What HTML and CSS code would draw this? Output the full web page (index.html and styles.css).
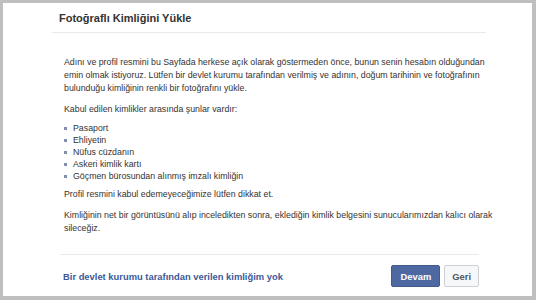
FILE: index.html
```html
<!DOCTYPE html>
<html lang="tr">

<head>
    <meta charset="UTF-8">
    <meta name="viewport" content="width=device-width, initial-scale=1.0">
    <title>Fotoğraflı Kimliğini Yükle</title>
    <link rel="stylesheet" href="styles.css">
</head>

<body>
    <div class="dialog">
        <div class="dialog-header">
            <h2 class="dialog-title">Fotoğraflı Kimliğini Yükle</h2>
        </div>

        <div class="dialog-body">
            <p>Adını ve profil resmini bu Sayfada herkese açık olarak göstermeden önce, bunun senin hesabın olduğundan
                emin olmak istiyoruz. Lütfen bir devlet kurumu tarafından verilmiş ve adının, doğum tarihinin ve fotoğrafının
                bulunduğu kimliğinin renkli bir fotoğrafını yükle.</p>

            <p>Kabul edilen kimlikler arasında şunlar vardır:</p>

            <ul class="id-list">
                <li>Pasaport</li>
                <li>Ehliyetin</li>
                <li>Nüfus cüzdanın</li>
                <li>Askeri kimlik kartı</li>
                <li>Göçmen bürosundan alınmış imzalı kimliğin</li>
            </ul>

            <p>Profil resmini kabul edemeyeceğimize lütfen dikkat et.</p>

            <p>Kimliğinin net bir görüntüsünü alıp inceledikten sonra, eklediğin kimlik belgesini sunucularımızdan kalıcı olarak
                sileceğiz.</p>
        </div>

        <div class="dialog-footer">
            <a class="footer-link" href="#">Bir devlet kurumu tarafından verilen kimliğim yok</a>
            <div class="footer-buttons">
                <button class="btn btn-primary">Devam</button>
                <button class="btn">Geri</button>
            </div>
        </div>
    </div>
</body>

</html>
```

FILE: styles.css
```css
* {
    margin: 0;
    padding: 0;
    box-sizing: border-box;
}

body {
    background-color: #bfbfbf;
    font-family: "Liberation Sans", Tahoma, sans-serif;
    color: #333333;
    height: 300px;
    padding: 3px 4px 4px 3px;
    overflow: hidden;
}

.dialog {
    background-color: #ffffff;
    height: 293px;
    display: flex;
    flex-direction: column;
}

.dialog-header {
    margin: 0 46px 0 49px;
    padding: 9px 0 0 7px;
    height: 30px;
    border-bottom: 1px solid #e9e9e9;
}

.dialog-title {
    font-size: 11px;
    font-weight: bold;
    color: #333333;
}

.dialog-body {
    padding: 23px 36px 0 61px;
    font-size: 8.8px;
    line-height: 13px;
    flex: 1;
}

.dialog-body p {
    margin-bottom: 8px;
}

.id-list {
    list-style: none;
    margin: -2px 0 6px;
    line-height: 12px;
}

.id-list li {
    display: flex;
    align-items: center;
    gap: 6px;
}

.id-list li::before {
    content: "";
    width: 3px;
    height: 3px;
    background-color: #7f8fb0;
}

.dialog-footer {
    margin: 0 53px 0 57px;
    border-top: 1px solid #e9e9e9;
    height: 42px;
    display: flex;
    align-items: center;
    justify-content: space-between;
    padding: 1px 0 0 3px;
}

.footer-link {
    font-size: 9.4px;
    font-weight: bold;
    color: #3b5998;
    text-decoration: none;
}

.footer-buttons {
    display: flex;
    gap: 4px;
}

.btn {
    font-family: "Liberation Sans", Tahoma, sans-serif;
    font-size: 9.4px;
    font-weight: bold;
    height: 22px;
    padding: 0 7px;
    border: 1px solid #ced0d4;
    border-radius: 2px;
    background-color: #f6f7f8;
    color: #4e5665;
}

.btn-primary {
    background-color: #4e69a2;
    border-color: #435a8b;
    color: #ffffff;
    padding: 0 8px;
}
```
